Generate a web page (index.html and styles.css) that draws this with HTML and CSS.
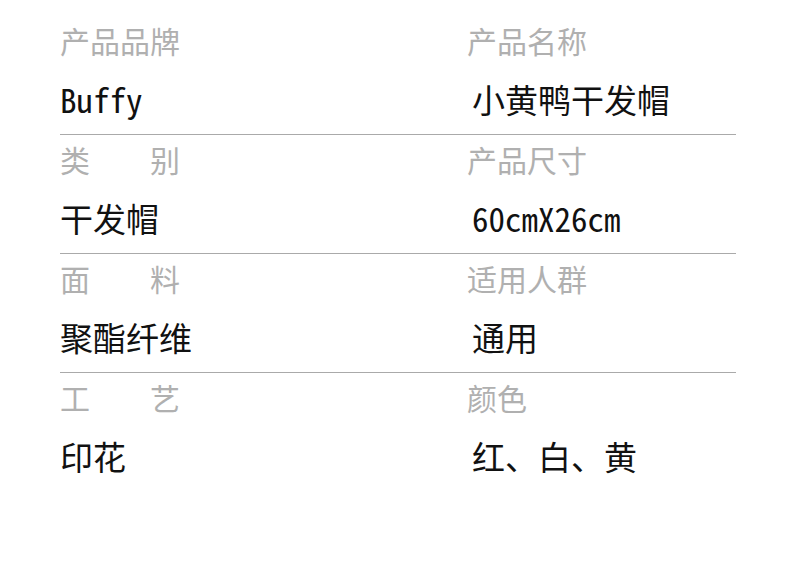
FILE: index.html
```html
<!DOCTYPE html>
<html lang="zh-CN">
<head>
<meta charset="utf-8">
<title>产品参数</title>
<link rel="stylesheet" href="styles.css">
</head>
<body>
<div class="specs">
  <div class="row">
    <div class="cell">
      <div class="label">产品品牌</div>
      <div class="value">Buffy</div>
    </div>
    <div class="cell right">
      <div class="label">产品名称</div>
      <div class="value">小黄鸭干发帽</div>
    </div>
  </div>
  <div class="row">
    <div class="cell">
      <div class="label">类　　别</div>
      <div class="value">干发帽</div>
    </div>
    <div class="cell right">
      <div class="label">产品尺寸</div>
      <div class="value">60cmX26cm</div>
    </div>
  </div>
  <div class="row">
    <div class="cell">
      <div class="label">面　　料</div>
      <div class="value">聚酯纤维</div>
    </div>
    <div class="cell right">
      <div class="label">适用人群</div>
      <div class="value">通用</div>
    </div>
  </div>
  <div class="row last">
    <div class="cell">
      <div class="label">工　　艺</div>
      <div class="value">印花</div>
    </div>
    <div class="cell right">
      <div class="label">颜色</div>
      <div class="value">红、白、黄</div>
    </div>
  </div>
</div>
</body>
</html>
```

FILE: styles.css
```css
html, body {
  margin: 0;
  padding: 0;
  background: #ffffff;
}

body {
  width: 800px;
  height: 580px;
  overflow: hidden;
  font-family: "Noto Sans Mono CJK SC", "Noto Sans CJK SC", "DejaVu Sans Mono", monospace;
}

.specs {
  padding: 16px 0 0 60px;
  width: 676px;
}

.row {
  display: grid;
  grid-template-columns: 407px 269px;
  padding: 9px 0 18px;
  border-bottom: 1px solid #aaaaaa;
}

.row.last {
  border-bottom: none;
}

.cell {
  display: flex;
  flex-direction: column;
  gap: 28px;
}

.label {
  font-size: 30px;
  line-height: 30px;
  color: #b0b0b0;
  white-space: pre;
}

.value {
  font-size: 33px;
  line-height: 33px;
  color: #111111;
  white-space: pre;
}

.right .value {
  padding-left: 5px;
}
```
